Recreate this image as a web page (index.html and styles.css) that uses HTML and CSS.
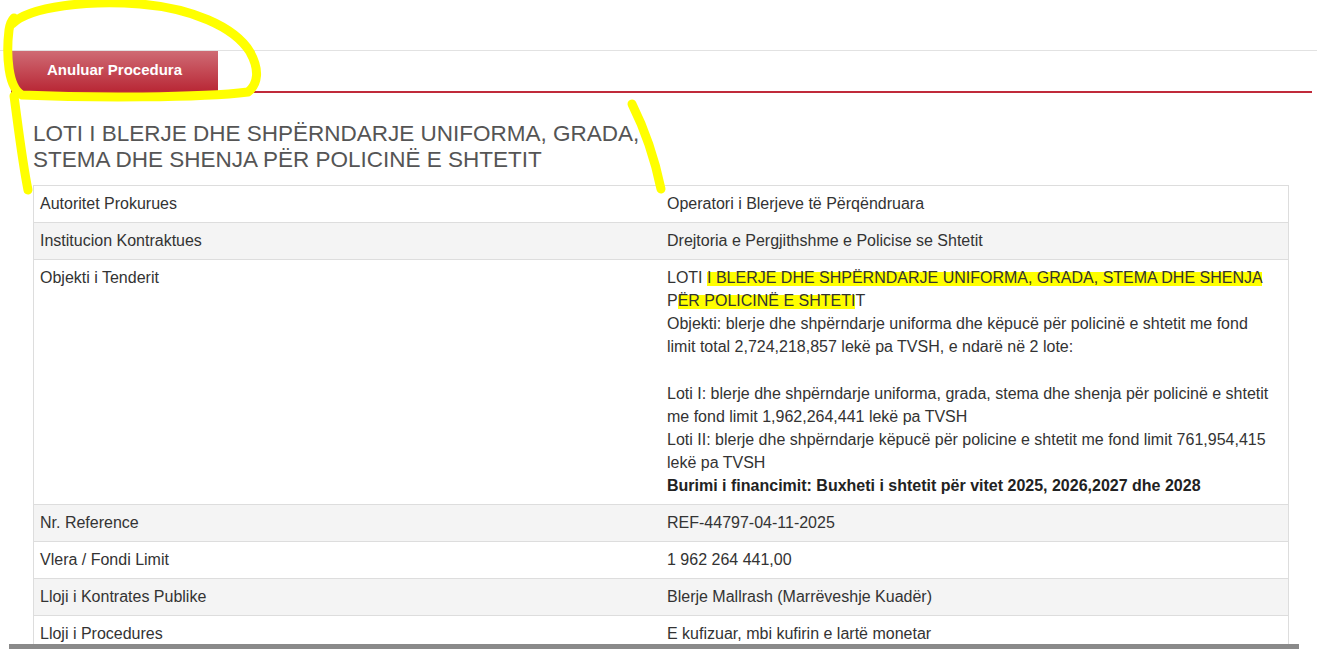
FILE: index.html
```html
<!DOCTYPE html>
<html lang="sq">
<head>
    <meta charset="UTF-8">
    <meta name="viewport" content="width=device-width, initial-scale=1.0">
    <title>Procedura e Prokurimit</title>
    <link rel="stylesheet" href="styles.css">
</head>
<body>
    <div class="page">
        <div class="tabs">
            <div class="tab-active">Anuluar Procedura</div>
        </div>

        <h1 class="tender-title">LOTI I BLERJE DHE SHPËRNDARJE UNIFORMA, GRADA, STEMA DHE SHENJA PËR POLICINË E SHTETIT</h1>

        <table class="details">
            <tr>
                <td>Autoritet Prokurues</td>
                <td>Operatori i Blerjeve të Përqëndruara</td>
            </tr>
            <tr class="alt">
                <td>Institucion Kontraktues</td>
                <td>Drejtoria e Pergjithshme e Policise se Shtetit</td>
            </tr>
            <tr>
                <td>Objekti i Tenderit</td>
                <td>
                    LOTI <span class="marker">I BLERJE DHE SHPËRNDARJE UNIFORMA, GRADA, STEMA DHE SHENJA</span>
                    P<span class="marker">ËR POLICINË E SHTETI</span>T<br>
                    Objekti: blerje dhe shpërndarje uniforma dhe këpucë për policinë e shtetit me fond limit total 2,724,218,857 lekë pa TVSH, e ndarë në 2 lote:<br>
                    <br>
                    Loti I: blerje dhe shpërndarje uniforma, grada, stema dhe shenja për policinë e shtetit me fond limit 1,962,264,441 lekë pa TVSH<br>
                    Loti II: blerje dhe shpërndarje këpucë për policine e shtetit me fond limit 761,954,415 lekë pa TVSH<br>
                    <strong>Burimi i financimit: Buxheti i shtetit për vitet 2025, 2026,2027 dhe 2028</strong>
                </td>
            </tr>
            <tr class="alt">
                <td>Nr. Reference</td>
                <td>REF-44797-04-11-2025</td>
            </tr>
            <tr>
                <td>Vlera / Fondi Limit</td>
                <td>1 962 264 441,00</td>
            </tr>
            <tr class="alt">
                <td>Lloji i Kontrates Publike</td>
                <td>Blerje Mallrash (Marrëveshje Kuadër)</td>
            </tr>
            <tr>
                <td>Lloji i Procedures</td>
                <td>E kufizuar, mbi kufirin e lartë monetar</td>
            </tr>
        </table>
    </div>

    <!-- hand-drawn highlighter marks on the screenshot -->
    <svg class="scribble" width="1317" height="649" viewBox="0 0 1317 649">
        <path d="M12 24 C 30 6, 90 0, 140 4 C 190 8, 234 26, 250 52 C 260 70, 258 84, 248 92 C 200 98, 90 98, 22 95 C 8 88, 6 55, 9 30 C 10 24, 12 20, 14 18"/>
        <path d="M14 96 C 18 125, 22 160, 28 190"/>
        <path d="M632 104 C 645 130, 655 160, 661 189"/>
    </svg>

    <div class="hscroll"></div>
</body>
</html>
```

FILE: styles.css
```css
/* General */
body {
    margin: 0;
    font-family: "Liberation Sans", Arial, sans-serif;
    color: #333;
    background: #fff;
    overflow: hidden;
}

.page {
    margin-top: 50px;
    border-top: 1px solid #e2e2e2;
}

/* Tabs */
.tabs {
    margin-left: 11px;
    margin-right: 5px;
    border-bottom: 2px solid #c02a3a;
}

.tab-active {
    width: 207px;
    height: 40px;
    line-height: 38px;
    text-align: center;
    color: #fff;
    font-size: 15px;
    font-weight: bold;
    background: linear-gradient(to bottom, #cf6b74, #b92836);
}

/* Title */
.tender-title {
    margin: 28px 0 12px 33px;
    max-width: 640px;
    font-size: 22.5px;
    line-height: 26px;
    font-weight: normal;
    color: #555;
}

/* Details table */
.details {
    margin-left: 33px;
    width: 1256px;
    border-collapse: collapse;
    font-size: 16px;
    line-height: 23.1px;
}

.details td {
    width: 50%;
    padding: 6px 9px 7px 6px;
    border-top: 1px solid #ddd;
    vertical-align: top;
}

.details tr {
    border-left: 1px solid #ddd;
    border-right: 1px solid #ddd;
}

.details tr.alt {
    background: #f4f4f4;
}

.details strong {
    color: #222;
}

.marker {
    background: linear-gradient(to bottom, transparent 3px, #ffff00 3px, #ffff00 19px, transparent 19px);
}

/* Overlay marks */
.scribble {
    position: absolute;
    top: 0;
    left: 0;
    pointer-events: none;
}

.scribble path {
    fill: none;
    stroke: #ffff00;
    stroke-width: 9;
    stroke-linecap: round;
}

.hscroll {
    position: fixed;
    left: 9px;
    right: 18px;
    bottom: 0;
    height: 5px;
    background: #8a8a8a;
}
```
